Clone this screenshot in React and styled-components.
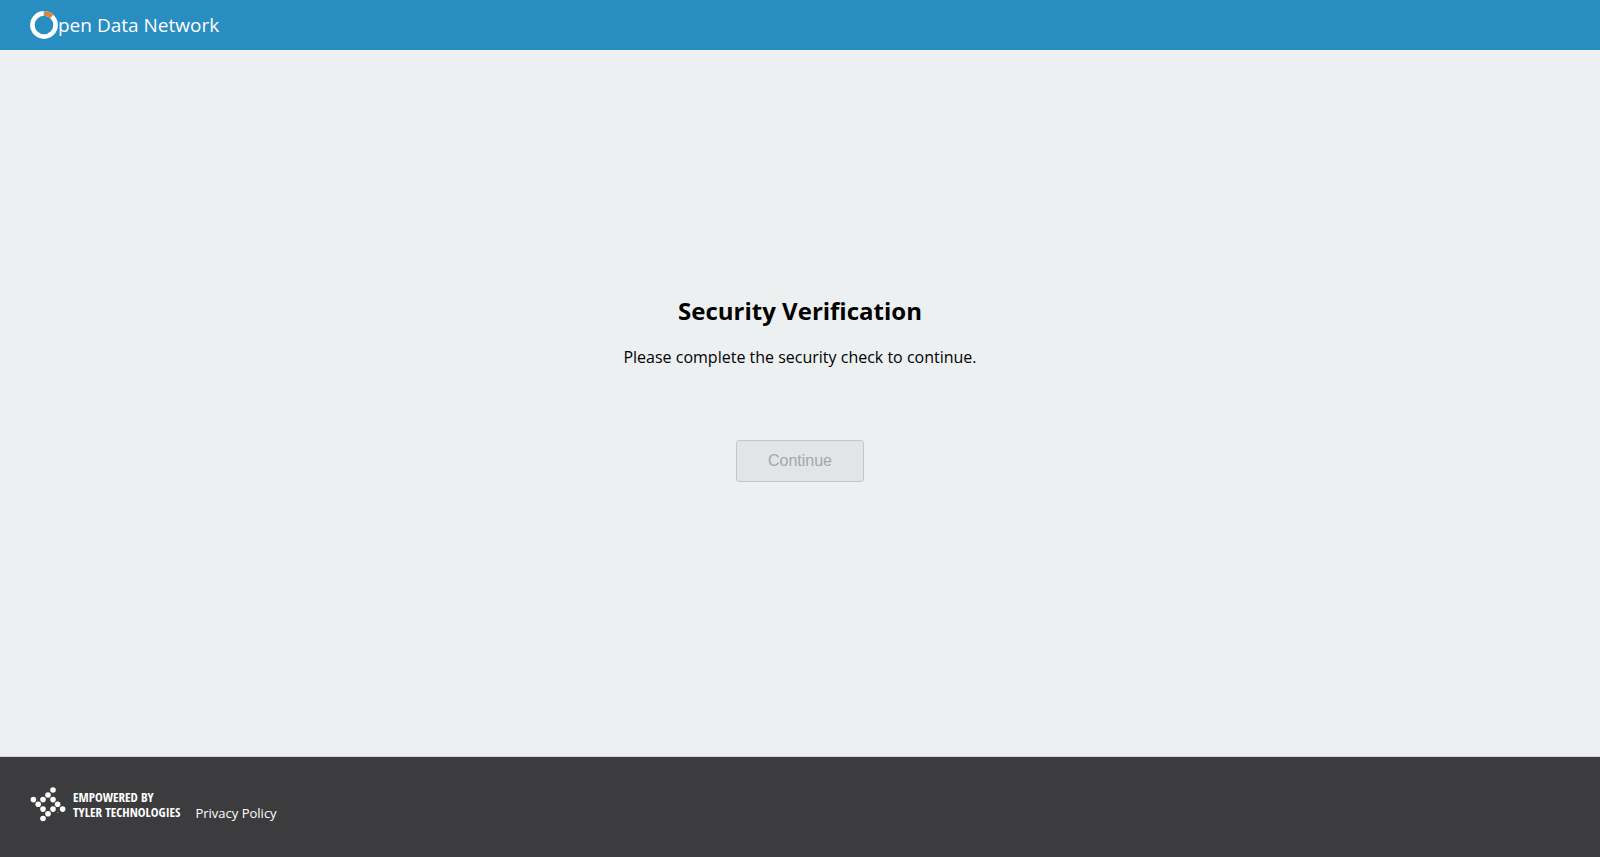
import React from "react";
import styled, { createGlobalStyle } from "styled-components";

const dots = [
    [23, 3],
    [18, 8],
    [3.4, 12.6],
    [13, 12.6],
    [23, 12.6],
    [8.2, 17.3],
    [27.6, 17.3],
    [13, 22.1],
    [23, 22.1],
    [32.6, 22.1],
    [18, 26.8],
    [13, 31.5],
];

const NetworkLogo = () => (
    <Ring viewBox="0 0 28 28" aria-hidden="true">
        <circle cx="14" cy="14" r="11.6" fill="none" stroke="#fff" strokeWidth="4.6" />
        <path d="M14.6 2.4A11.6 11.6 0 0 1 21.8 5.4" fill="none" stroke="#e0812f" strokeWidth="4.6" />
        <path d="M14.2 0V5" stroke="#288dc1" strokeWidth="0.8" />
    </Ring>
);

const TylerMark = () => (
    <Mark viewBox="0 0 36 36" aria-hidden="true">
        {dots.map(([x, y]) => (
            <circle key={`${x}-${y}`} cx={x} cy={y} r="2.8" fill="#fff" />
        ))}
        <circle cx="27.8" cy="25.6" r="0.6" fill="#a0a0a1" />
    </Mark>
);

const App = () => {
    return (
        <Page>
            <GlobalStyle />
            <Header>
                <HomeLink href="/" aria-label="Open Data Network">
                    <NetworkLogo />
                    <LogoText>pen Data Network</LogoText>
                </HomeLink>
            </Header>
            <Main>
                <Title>Security Verification</Title>
                <Message>Please complete the security check to continue.</Message>
                <Continue type="submit" disabled>Continue</Continue>
            </Main>
            <Footer>
                <TylerLink href="/">
                    <TylerMark />
                    <TylerText>
                        EMPOWERED BY
                        <br />
                        TYLER TECHNOLOGIES
                    </TylerText>
                </TylerLink>
                <PrivacyLink href="/privacy">Privacy Policy</PrivacyLink>
            </Footer>
        </Page>
    );
};

export default App;

const GlobalStyle = createGlobalStyle`
    * {
        box-sizing: border-box;
    }
    body {
        margin: 0;
        background: #ecf0f1;
        color: #000;
        font-family: "Open Sans", "Noto Sans", sans-serif;
    }
`;

const Page = styled.div`
    min-height: 100vh;
    display: flex;
    flex-direction: column;
`;

const Header = styled.header`
    height: 50px;
    padding: 0 30px;
    display: flex;
    align-items: center;
    background: #288dc1;
`;

const HomeLink = styled.a`
    display: flex;
    align-items: center;
    color: #fff;
    text-decoration: none;
`;

const Ring = styled.svg`
    width: 28px;
    height: 28px;
`;

const LogoText = styled.span`
    font-size: 19px;
    line-height: 28px;
    white-space: nowrap;
`;

const Main = styled.main`
    flex: 1;
    padding-bottom: 31px;
    display: flex;
    flex-direction: column;
    align-items: center;
    justify-content: center;
`;

const Title = styled.h1`
    margin: 0 0 16px;
    font-size: 24px;
    font-weight: 700;
    line-height: 36px;
`;

const Message = styled.p`
    margin: 0 0 71px;
    font-size: 16px;
    line-height: 24px;
`;

const Continue = styled.button`
    height: 42px;
    padding: 0 31px;
    border: 1px solid #c3c7c8;
    border-radius: 3px;
    background: #e1e5e6;
    color: #a5a8a9;
    font-family: "Liberation Sans", Arial, sans-serif;
    font-size: 16px;
`;

const Footer = styled.footer`
    padding: 30px 30px 34px;
    display: flex;
    align-items: flex-start;
    border-top: 1px solid #d0d4d5;
    background: #3c3c3e;
`;

const TylerLink = styled.a`
    display: flex;
    align-items: center;
    gap: 7px;
    color: #fff;
    text-decoration: none;
`;

const Mark = styled.svg`
    width: 36px;
    height: 36px;
`;

const TylerText = styled.span`
    font-family: "Open Sans Condensed", "Roboto Condensed", "Liberation Sans Narrow", sans-serif;
    font-size: 13px;
    font-weight: 700;
    line-height: 15px;
    white-space: nowrap;
`;

const PrivacyLink = styled.a`
    margin: 17px 0 0 15px;
    color: #fff;
    font-size: 13px;
    line-height: 19px;
    text-decoration: none;
`;
